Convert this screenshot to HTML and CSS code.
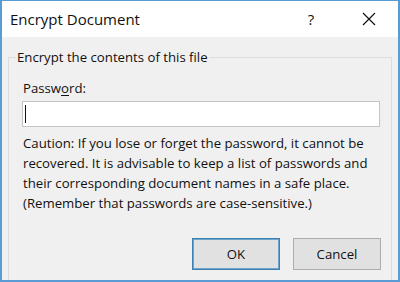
FILE: index.html
```html
<!DOCTYPE html>
<html lang="en">
<head>
    <meta charset="UTF-8">
    <title>Encrypt Document</title>
    <link rel="stylesheet" href="styles.css">
</head>
<body>

    <div class="window">
        <div class="titlebar">
            <span class="title">Encrypt Document</span>
            <span class="help">?</span>
            <span class="close">
                <svg width="14" height="14" viewBox="0 0 14 14"><path d="M1 1L13 13M13 1L1 13" stroke="#111" stroke-width="1.2" fill="none"/></svg>
            </span>
        </div>

        <div class="content">
            <fieldset class="group">
                <legend>Encrypt the contents of this file</legend>
                <div class="label">Passw<u>o</u>rd:</div>
                <div class="input"><span class="caret"></span></div>
                <p class="caution">Caution: If you lose or forget the password, it cannot be<br>recovered. It is advisable to keep a list of passwords and<br>their corresponding document names in a safe place.<br>(Remember that passwords are case-sensitive.)</p>
                <div class="buttons">
                    <button class="btn btn_ok">OK</button>
                    <button class="btn">Cancel</button>
                </div>
            </fieldset>
        </div>
    </div>

</body>
</html>
```

FILE: styles.css
```css
*{margin:0;padding:0;box-sizing:border-box;}
body{width:400px;height:282px;overflow:hidden;font-family:"Open Sans","Noto Sans",sans-serif;color:#111;}

.window{width:400px;height:282px;display:flex;flex-direction:column;border:1px solid #5b9bd5;border-left-width:2px;border-right-width:2px;border-bottom-width:2px;background-color:#f0f0f0;}

.titlebar{height:36px;background-color:#fff;display:flex;align-items:center;padding-left:8px;}
.titlebar .title{font-size:15px;flex:1;}
.titlebar .help{font-size:15px;width:58px;text-align:center;margin-left:-1px;}
.titlebar .close{width:58px;height:36px;display:flex;align-items:center;justify-content:center;}

.content{flex:1;display:flex;padding:10px 6px 0 6px;}
.group{flex:1;display:flex;flex-direction:column;border:1px solid #dcdcdc;border-bottom:none;padding:0 10px 0 13px;}
.group legend{font-size:13.2px;line-height:20px;margin-left:-6px;padding:0 1px;}

.label{font-size:13.2px;line-height:20px;margin-top:11px;padding-left:1px;}
.label u{text-decoration-thickness:1px;text-underline-offset:2px;}
.input{height:26px;margin-top:3px;width:358px;background-color:#fff;border:1px solid #c4c4c4;padding:3px 0 0 2px;}
.input .caret{display:block;width:1px;height:18px;background-color:#111;}

.caution{font-size:13.2px;line-height:20px;margin-top:6px;padding-left:1px;}

.buttons{display:flex;justify-content:flex-end;gap:13px;margin-top:25px;}
.btn{width:88px;height:32px;font-family:inherit;font-size:13.2px;color:#111;background-color:#e1e1e1;border:1px solid #adadad;}
.btn_ok{border:1px solid #3c7fb1;box-shadow:inset 0 0 0 1px #6fa4cc;}
```
